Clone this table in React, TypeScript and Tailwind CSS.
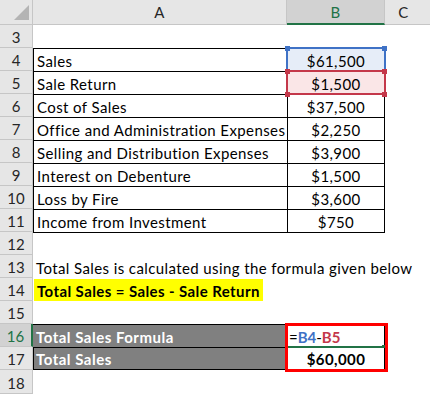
import React from "react";

type Row = {
  n: number;
  a?: string;
  b?: string;
  table?: boolean;
};

const rows: Row[] = [
  { n: 3 },
  { n: 4, a: "Sales", b: "$61,500", table: true },
  { n: 5, a: "Sale Return", b: "$1,500", table: true },
  { n: 6, a: "Cost of Sales", b: "$37,500", table: true },
  { n: 7, a: "Office and Administration Expenses", b: "$2,250", table: true },
  { n: 8, a: "Selling and Distribution Expenses", b: "$3,900", table: true },
  { n: 9, a: "Interest on Debenture", b: "$1,500", table: true },
  { n: 10, a: "Loss by Fire", b: "$3,600", table: true },
  { n: 11, a: "Income from Investment", b: "$750", table: true },
];

const RowNum = ({ n, active }: { n: number; active?: boolean }) => (
  <div
    className={
      "w-[33px] shrink-0 flex items-end justify-center pb-[1px] border-b border-r tracking-normal " +
      (active
        ? "bg-[#d2d2d2] text-[#217346] border-b-[#c6c6c6] border-r-2 border-r-[#217346]"
        : "bg-[#e6e6e6] text-[#262626] border-[#c6c6c6]")
    }
  >
    {n}
  </div>
);

const App = () => {
  return (
    <div className="relative w-[430px] h-[394px] overflow-hidden bg-white text-[15px] leading-[18px] tracking-[0.4px] text-black font-['Lato','Liberation_Sans',sans-serif]">
      {/* column headers */}
      <div className="flex h-[25px] bg-[#e6e6e6] text-[#262626]">
        <div className="w-[33px] shrink-0 border-r border-b border-[#c6c6c6] flex items-end justify-end pr-[3px] pb-[4px]">
          <svg width="15" height="15" viewBox="0 0 15 15">
            <polygon points="15,0 15,15 0,15" fill="#b4b4b4" />
          </svg>
        </div>
        <div className="w-[254px] shrink-0 border-r border-b border-[#c6c6c6] flex items-center justify-center">
          A
        </div>
        <div className="w-[98px] shrink-0 bg-[#d2d2d2] border-r border-[#c6c6c6] border-b-2 border-b-[#217346] flex items-center justify-center text-[#217346]">
          B
        </div>
        <div className="flex-1 border-b border-[#c6c6c6] flex items-center justify-center pr-[8px]">
          C
        </div>
      </div>

      {rows.map((r) => (
        <div key={r.n} className="flex h-[23px]">
          <RowNum n={r.n} />
          <div
            className={
              "w-[254px] shrink-0 flex items-end pl-[3px] pb-[1px] whitespace-nowrap " +
              (r.table ? "border-l border-t border-black" : "")
            }
          >
            {r.a}
          </div>
          <div
            className={
              "w-[98px] shrink-0 flex items-end justify-center pb-[1px] " +
              (r.table ? "border-l border-r border-t border-black " : "") +
              (r.n === 4 ? "bg-[#e6edf8]" : r.n === 5 ? "bg-[#fae6e7]" : "")
            }
          >
            {r.b}
          </div>
          <div className="flex-1" />
        </div>
      ))}

      <div className="flex h-[23px]">
        <RowNum n={12} />
        <div className="w-[254px] shrink-0 border-t border-black" />
        <div className="w-[98px] shrink-0 border-t border-black" />
      </div>

      <div className="flex h-[23px]">
        <RowNum n={13} />
        <div className="flex items-end pl-[3px] pb-[1px] whitespace-nowrap">
          Total Sales is calculated using the formula given below
        </div>
      </div>

      <div className="flex h-[23px]">
        <RowNum n={14} />
        <div className="flex items-end pl-[1px] pt-[1px]">
          <div className="h-[22px] w-[229px] bg-[#ffff00] pl-[3px] pt-[3px] font-bold tracking-[0.4px] whitespace-nowrap">
            Total Sales = Sales - Sale Return
          </div>
        </div>
      </div>

      <div className="flex h-[23px]">
        <RowNum n={15} />
      </div>

      <div className="flex h-[23px]">
        <RowNum n={16} active />
        <div className="w-[254px] shrink-0 bg-[#808080] border-t border-black flex items-end pl-[3px] pb-[1px] text-white font-bold tracking-[0.5px]">
          Total Sales Formula
        </div>
        <div className="w-[98px] shrink-0 border-t border-r border-black flex items-end pl-[2px] pb-[1px] font-bold tracking-normal">
          <span className="font-normal">=</span>
          <span className="text-[#3f72c6]">B4</span>
          <span className="font-normal">-</span>
          <span className="text-[#c4384a]">B5</span>
        </div>
      </div>

      <div className="flex h-[23px]">
        <RowNum n={17} />
        <div className="w-[254px] shrink-0 bg-[#808080] border-l border-t border-b border-black flex items-end pl-[2px] pb-[1px] text-white font-bold tracking-[0.5px]">
          Total Sales
        </div>
        <div className="w-[98px] shrink-0 border-l border-t border-r border-b border-black flex items-end justify-center pb-[1px] font-bold">
          $60,000
        </div>
      </div>

      <div className="flex h-[24px]">
        <RowNum n={18} />
      </div>

      {/* range highlights */}
      <div className="absolute left-[286px] top-[47px] w-[100px] h-[25px] border-2 border-[#3f72c6]" />
      <div className="absolute left-[285px] top-[46px] w-[5px] h-[5px] bg-[#3f72c6]" />
      <div className="absolute left-[382px] top-[46px] w-[5px] h-[5px] bg-[#3f72c6]" />
      <div className="absolute left-[286px] top-[70px] w-[100px] h-[25px] border-2 border-[#c4384a]" />
      <div className="absolute left-[285px] top-[69px] w-[5px] h-[5px] bg-[#c4384a]" />
      <div className="absolute left-[382px] top-[69px] w-[5px] h-[5px] bg-[#c4384a]" />
      <div className="absolute left-[285px] top-[92px] w-[5px] h-[5px] bg-[#c4384a]" />
      <div className="absolute left-[382px] top-[92px] w-[5px] h-[5px] bg-[#c4384a]" />

      {/* active cell edit line + red outline */}
      <div className="absolute left-[288px] top-[346px] w-[94px] h-[2px] bg-[#217346]" />
      <div className="absolute left-[382px] top-[345px] w-[3px] h-[3px] bg-[#217346]" />
      <div className="absolute left-[285px] top-[323px] w-[103px] h-[49px] border-[3px] border-[#ff0000]" />
    </div>
  );
};

export default App;
